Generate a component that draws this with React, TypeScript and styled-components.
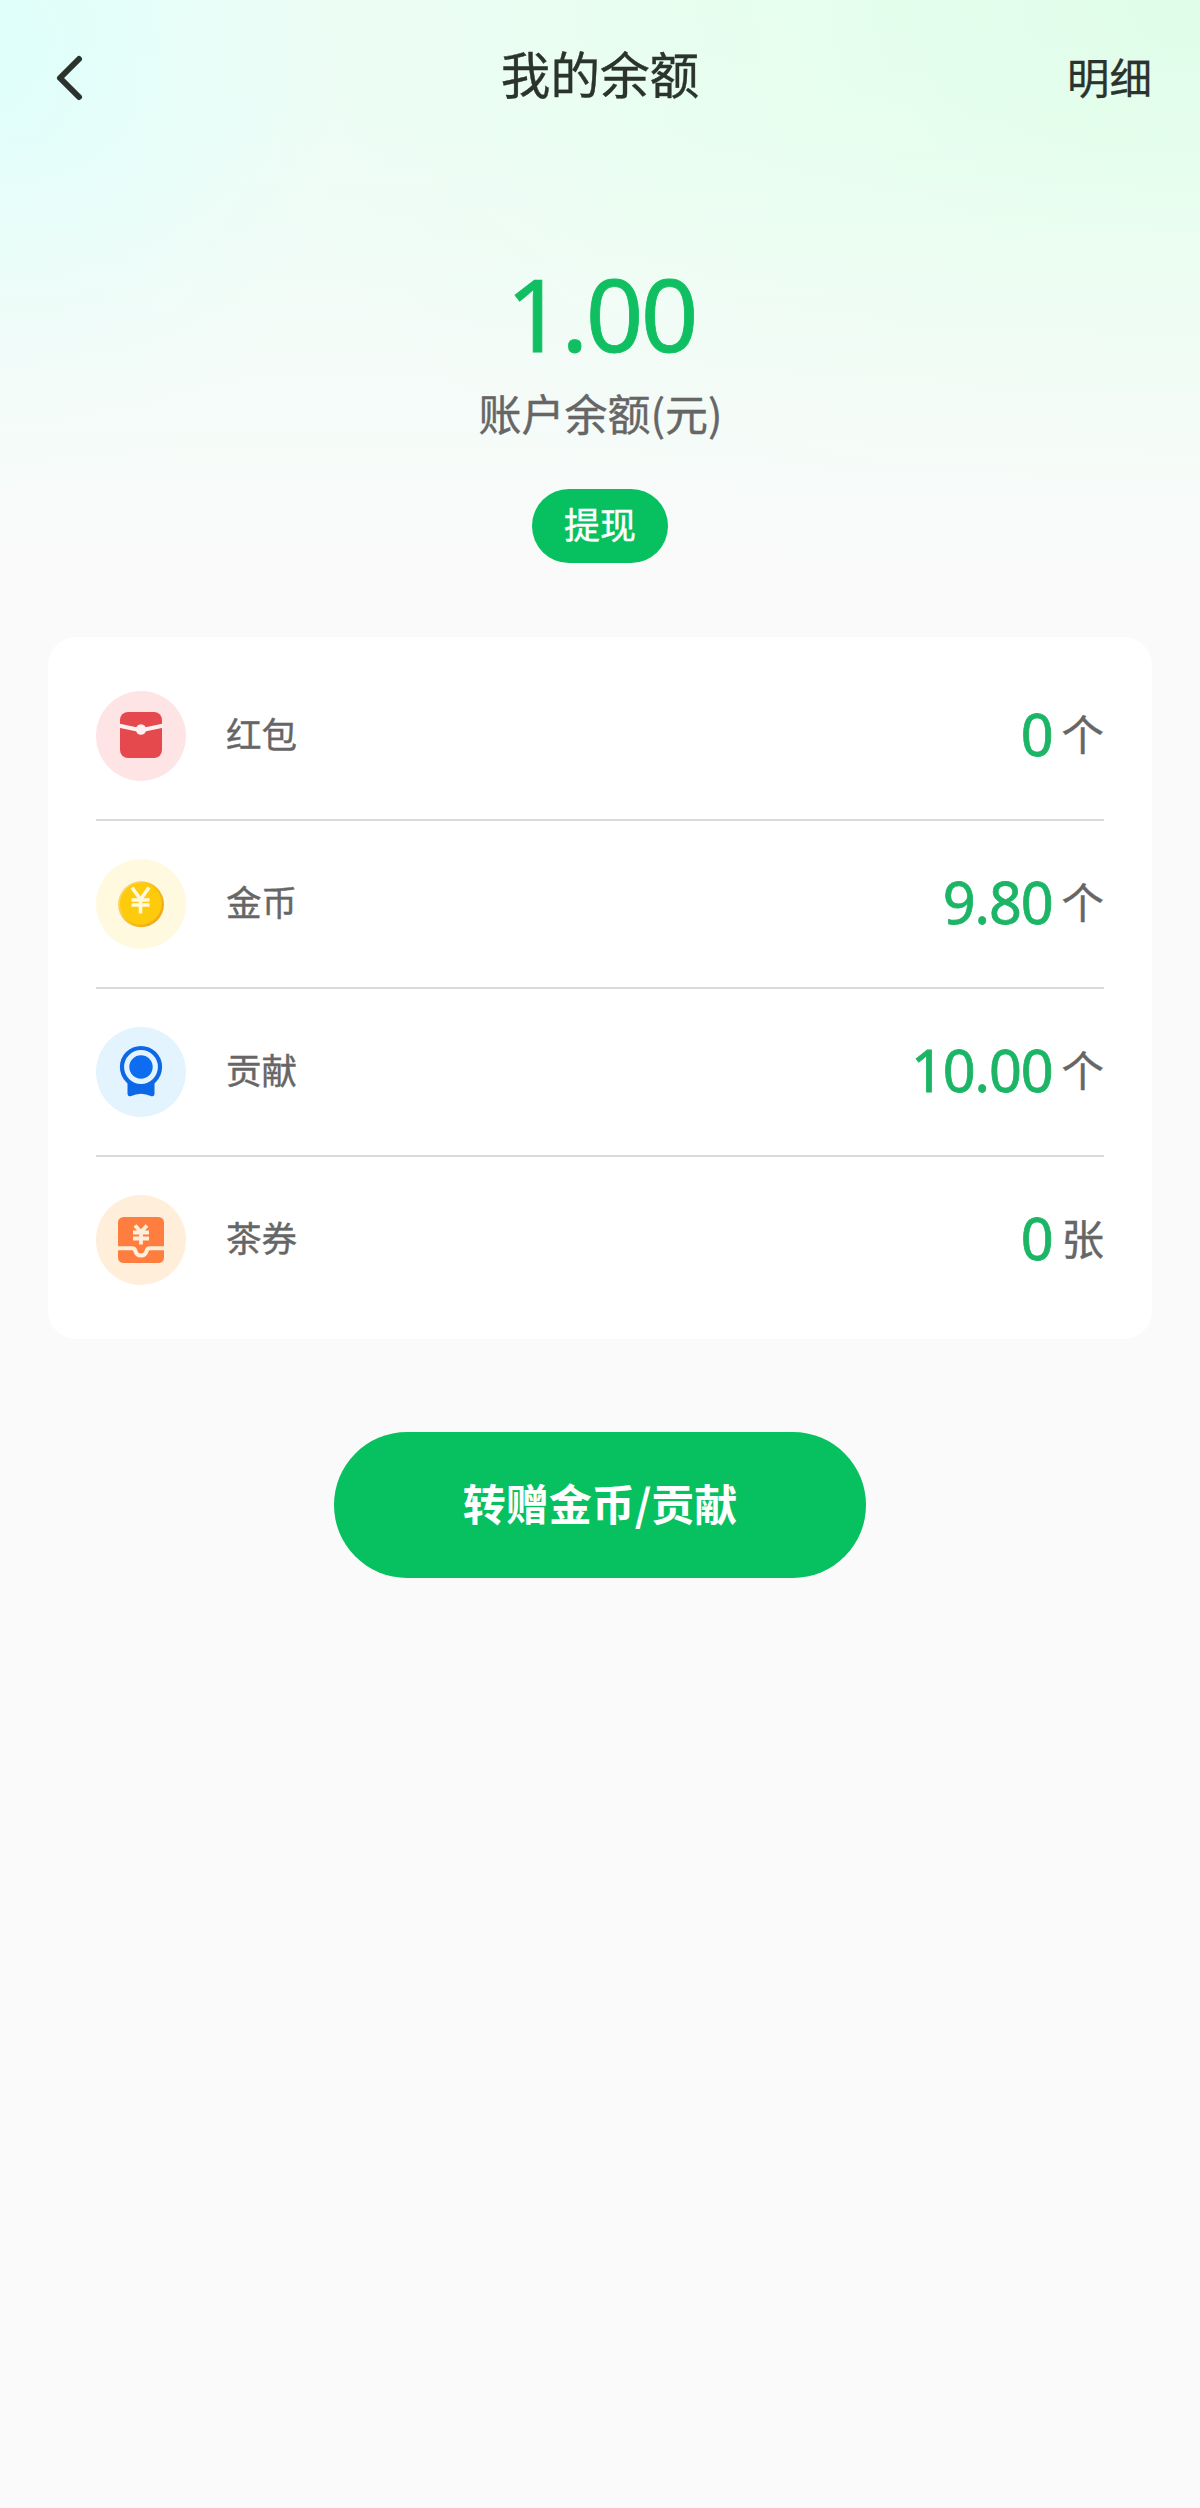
import React from "react";
import styled, { createGlobalStyle } from "styled-components";

const GlobalStyle = createGlobalStyle`
  * { box-sizing: border-box; }
  body {
    margin: 0;
    background: #fafafa;
    font-family: "Noto Sans CJK SC", "Noto Sans", sans-serif;
  }
  button { font: inherit; border: 0; padding: 0; background: none; cursor: pointer; }
`;

const Page = styled.main`
  display: flex;
  flex-direction: column;
  min-height: 2508px;
  background:
    linear-gradient(180deg, rgba(250, 250, 250, 0) 0, rgba(250, 250, 250, 0.05) 140px, rgba(250, 250, 250, 0.5) 370px, #fafafa 590px),
    radial-gradient(ellipse 330px 460px at 0 60px, rgba(220, 255, 250, 0.85) 0%, rgba(224, 255, 251, 0.65) 40%, rgba(232, 255, 252, 0) 100%),
    radial-gradient(ellipse 950px 620px at 1200px 0, #dffde9 0%, rgba(228, 255, 236, 0.85) 40%, rgba(236, 255, 243, 0) 100%),
    linear-gradient(#eefdf6, #eefdf6);
`;

const Header = styled.header`
  display: grid;
  grid-template-columns: 1fr auto 1fr;
  align-items: center;
  height: 156px;
  padding: 0 48px;
  color: #2b332e;
`;

const BackButton = styled.button`
  display: flex;
  justify-self: start;
  color: inherit;
`;

const Title = styled.h1`
  margin: 0;
  padding-bottom: 12px;
  font-size: 49.6px;
  font-weight: 400;
  line-height: 72px;
  -webkit-text-stroke: 0.4px currentColor;
`;

const DetailLink = styled.button`
  justify-self: end;
  padding-bottom: 4px;
  color: inherit;
  font-size: 42.5px;
  line-height: 60px;
  -webkit-text-stroke: 0.3px currentColor;
`;

const Summary = styled.section`
  display: flex;
  flex-direction: column;
  align-items: center;
  height: 481px;
  padding-top: 93px;
`;

const Balance = styled.div`
  padding-left: 2px;
  color: #0fbf61;
  font-family: "Noto Sans", sans-serif;
  font-size: 101px;
  letter-spacing: -2.6px;
  line-height: 128px;
  -webkit-text-stroke: 0.8px currentColor;
`;

const Caption = styled.div`
  margin-top: 4px;
  padding-left: 1px;
  color: #666;
  font-size: 43px;
  line-height: 62px;
  -webkit-text-stroke: 0.4px currentColor;
`;

const WithdrawButton = styled.button`
  width: 136px;
  height: 74px;
  margin-top: 46px;
  padding-bottom: 5px;
  border-radius: 37px;
  background: #07c160;
  color: #fff;
  font-size: 36px;
  line-height: 69px;
  -webkit-text-stroke: 0.4px currentColor;
`;

const Card = styled.section`
  margin: 0 48px;
  padding: 16px 48px 14px;
  border-radius: 28px;
  background: #fff;
`;

const Row = styled.div`
  display: flex;
  align-items: center;
  height: 168px;
  border-bottom: 2px solid #dadada;

  &:last-child { border-bottom-color: transparent; }
`;

const IconDisc = styled.div<{ $tint: string }>`
  display: flex;
  flex: none;
  width: 90px;
  height: 90px;
  border-radius: 50%;
  background: ${(p) => p.$tint};
`;

const Label = styled.span`
  flex: 1;
  padding: 0 0 6px 40px;
  color: #666;
  font-size: 35.6px;
  line-height: 52px;
  -webkit-text-stroke: 0.4px currentColor;
`;

const Amount = styled.span`
  padding-bottom: 4px;
  color: #1cb566;
  font-family: "Noto Sans", sans-serif;
  font-size: 57.5px;
  letter-spacing: -1.1px;
  line-height: 80px;
  -webkit-text-stroke: 0.8px currentColor;
`;

const Unit = styled.span`
  margin-left: 9px;
  padding-bottom: 6px;
  color: #666;
  font-size: 42.5px;
  line-height: 60px;
  -webkit-text-stroke: 0.4px currentColor;
`;

const TransferButton = styled.button`
  align-self: center;
  width: 532px;
  height: 146px;
  margin-top: 93px;
  padding-bottom: 6px;
  border-radius: 73px;
  background: #07c160;
  color: #fff;
  font-size: 43px;
  font-weight: 700;
  line-height: 140px;
`;

const PacketIcon = () => (
  <svg width="90" height="90" viewBox="0 0 90 90">
    <rect x="24" y="21" width="42" height="46" rx="8" fill="#e5484d" />
    <path d="M23.5 34.8 L40 38.2 H50 L66.5 34.8" fill="none" stroke="#fff1f1" strokeWidth="4" strokeLinejoin="round" />
    <circle cx="45" cy="38.5" r="5.2" fill="#fff1f1" />
  </svg>
);

const CoinIcon = () => (
  <svg width="90" height="90" viewBox="0 0 90 90">
    <defs>
      <linearGradient id="rim" x1="0" y1="0.2" x2="1" y2="0.8">
        <stop offset="0" stopColor="#fddc80" />
        <stop offset="0.5" stopColor="#f9be1c" />
        <stop offset="1" stopColor="#eda51c" />
      </linearGradient>
    </defs>
    <circle cx="45" cy="45.3" r="23" fill="url(#rim)" />
    <circle cx="44.8" cy="44.8" r="20.8" fill="#fdcb0c" />
    <path d="M36 28.5 L44.5 40.5 L53 28.5 M44.5 40 V54.5 M35.5 41 H53.5 M35.5 46 H53.5" fill="none" stroke="#fff9df" strokeWidth="3.6" />
  </svg>
);

const MedalIcon = () => (
  <svg width="90" height="90" viewBox="0 0 90 90">
    <path d="M31.5 54 H58.5 V67 Q58 70 55.5 69.2 Q50 66.7 45 66.7 Q40 66.7 34.5 69.2 Q32 70 31.5 67 Z" fill="#0d68e8" />
    <circle cx="45" cy="40" r="19" fill="#e3f4ff" stroke="#0d68e8" strokeWidth="4.2" />
    <circle cx="45" cy="40" r="11.7" fill="#0d6cf0" />
  </svg>
);

const TicketIcon = () => (
  <svg width="90" height="90" viewBox="0 0 90 90">
    <rect x="22" y="22" width="46" height="46" rx="5.5" fill="#ff7d3e" />
    <path d="M21 53.2 H36 Q38.8 53.2 39.2 55.5 Q40.5 60.6 45 60.6 Q49.5 60.6 50.8 55.5 Q51.2 53.2 54 53.2 H69" fill="none" stroke="#ffefda" strokeWidth="4" />
    <path d="M39 30.5 L45 37 L51 30.5 M45 37 V49.5 M37 37.5 H53 M37 43.5 H53" fill="none" stroke="#ffefda" strokeWidth="3.8" />
  </svg>
);

const assets = [
  { label: "红包", amount: "0", unit: "个", tint: "#ffe4e5", Icon: PacketIcon },
  { label: "金币", amount: "9.80", unit: "个", tint: "#fff9df", Icon: CoinIcon },
  { label: "贡献", amount: "10.00", unit: "个", tint: "#e3f4ff", Icon: MedalIcon },
  { label: "茶券", amount: "0", unit: "张", tint: "#ffefda", Icon: TicketIcon },
];

export default function App() {
  return (
    <>
      <GlobalStyle />
      <Page>
        <Header>
          <BackButton aria-label="返回">
            <svg width="42" height="48" viewBox="0 0 42 48" fill="none" stroke="currentColor" strokeWidth="6" strokeLinecap="round" strokeLinejoin="round">
              <path d="M31 5 L12 24 L31 43" />
            </svg>
          </BackButton>
          <Title>我的余额</Title>
          <DetailLink>明细</DetailLink>
        </Header>
        <Summary>
          <Balance>1.00</Balance>
          <Caption>账户余额(元)</Caption>
          <WithdrawButton>提现</WithdrawButton>
        </Summary>
        <Card>
          {assets.map(({ label, amount, unit, tint, Icon }) => (
            <Row key={label}>
              <IconDisc $tint={tint}><Icon /></IconDisc>
              <Label>{label}</Label>
              <Amount>{amount}</Amount>
              <Unit>{unit}</Unit>
            </Row>
          ))}
        </Card>
        <TransferButton>转赠金币/贡献</TransferButton>
      </Page>
    </>
  );
}
